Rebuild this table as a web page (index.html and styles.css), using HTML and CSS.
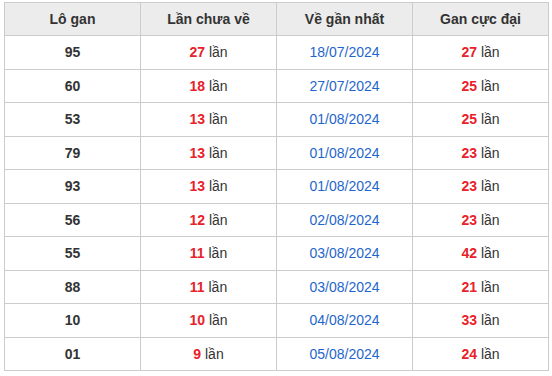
FILE: index.html
```html
<!DOCTYPE html>
<html lang="vi">
<head>
<meta charset="UTF-8">
<meta name="viewport" content="width=device-width, initial-scale=1.0">
<title>Lô gan</title>
<link rel="stylesheet" href="styles.css">
</head>
<body>

<!-- Bang thong ke lo gan -->
<table class="gan-table">
	<thead>
		<tr>
			<th>Lô gan</th>
			<th>Lần chưa về</th>
			<th>Về gần nhất</th>
			<th>Gan cực đại</th>
		</tr>
	</thead>
	<tbody>
		<tr><td class="so">95</td><td><b>27</b> lần</td><td class="ngay">18/07/2024</td><td><b>27</b> lần</td></tr>
		<tr><td class="so">60</td><td><b>18</b> lần</td><td class="ngay">27/07/2024</td><td><b>25</b> lần</td></tr>
		<tr><td class="so">53</td><td><b>13</b> lần</td><td class="ngay">01/08/2024</td><td><b>25</b> lần</td></tr>
		<tr><td class="so">79</td><td><b>13</b> lần</td><td class="ngay">01/08/2024</td><td><b>23</b> lần</td></tr>
		<tr><td class="so">93</td><td><b>13</b> lần</td><td class="ngay">01/08/2024</td><td><b>23</b> lần</td></tr>
		<tr><td class="so">56</td><td><b>12</b> lần</td><td class="ngay">02/08/2024</td><td><b>23</b> lần</td></tr>
		<tr><td class="so">55</td><td><b>11</b> lần</td><td class="ngay">03/08/2024</td><td><b>42</b> lần</td></tr>
		<tr><td class="so">88</td><td><b>11</b> lần</td><td class="ngay">03/08/2024</td><td><b>21</b> lần</td></tr>
		<tr><td class="so">10</td><td><b>10</b> lần</td><td class="ngay">04/08/2024</td><td><b>33</b> lần</td></tr>
		<tr><td class="so">01</td><td><b>9</b> lần</td><td class="ngay">05/08/2024</td><td><b>24</b> lần</td></tr>
	</tbody>
</table>

</body>
</html>
```

FILE: styles.css
```css
body {
	font-family: "Liberation Sans", Arial, sans-serif;
	background-color: #fff;
	margin: 0;
	padding: 2px 3px 0 4px;
}
.gan-table {
	width: 545px;
	border-collapse: collapse;
	table-layout: fixed;
	font-size: 14px;
	color: #333;
}
.gan-table th,
.gan-table td {
	border: 1px solid #ccc;
	text-align: center;
	height: 32.5px;
	padding: 0;
}
.gan-table th {
	background-color: #ececec;
	font-weight: bold;
	height: 32px;
}
.gan-table td b {
	color: #e8212b;
}
.gan-table .so {
	font-weight: bold;
}
.gan-table .ngay {
	color: #1f66cc;
}
```
